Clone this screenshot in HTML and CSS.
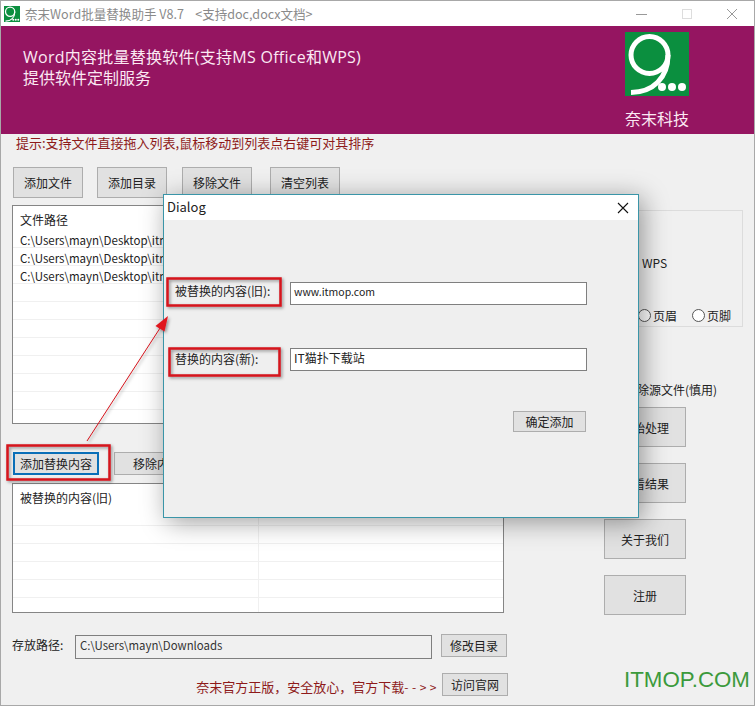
FILE: index.html
```html
<!DOCTYPE html>
<html lang="zh-CN">
<head>
<meta charset="utf-8">
<title>奈末Word批量替换助手</title>
<link rel="stylesheet" href="styles.css">
</head>
<body>
<svg class="defs" width="0" height="0">
  <symbol id="logo" viewBox="0 0 64 64">
    <rect width="64" height="64" fill="#0b8f3f"/>
    <circle cx="24.5" cy="23" r="18.5" fill="none" stroke="#fff" stroke-width="5"/>
    <path d="M43 23C43 46 28 60 6 60.5" fill="none" stroke="#fff" stroke-width="5"/>
    <circle cx="37" cy="55" r="4" fill="#fff"/>
    <circle cx="47" cy="55" r="4" fill="#fff"/>
    <circle cx="57" cy="55" r="4" fill="#fff"/>
  </symbol>
</svg>

<div class="window">
  <div class="titlebar">
    <svg class="app-icon"><use href="#logo"/></svg>
    <span class="title-text">奈末Word批量替换助手 V8.7 &nbsp; &nbsp;&lt;支持doc,docx文档&gt;</span>
    <div class="controls">
      <svg width="12" height="12" viewBox="0 0 12 12"><path d="M0 6.5H11" stroke="#999"/></svg>
      <svg width="12" height="12" viewBox="0 0 12 12"><rect x="1.5" y="1.5" width="9" height="9" fill="none" stroke="#ddd"/></svg>
      <svg width="12" height="12" viewBox="0 0 12 12"><path d="M1 1L11 11M11 1L1 11" stroke="#999"/></svg>
    </div>
  </div>

  <header class="banner">
    <div class="banner-text">
      <div class="banner-line">Word内容批量替换软件(支持MS Office和WPS)</div>
      <div>提供软件定制服务</div>
    </div>
    <div class="brand">
      <svg class="brand-logo"><use href="#logo"/></svg>
      <div class="brand-name">奈末科技</div>
    </div>
  </header>

  <main class="content">
    <section class="left">
      <div class="hint">提示:支持文件直接拖入列表,鼠标移动到列表点右键可对其排序</div>
      <div class="toolbar">
        <button class="btn btn-tool">添加文件</button>
        <button class="btn btn-tool gap-14">添加目录</button>
        <button class="btn btn-tool gap-15">移除文件</button>
        <button class="btn btn-tool gap-18">清空列表</button>
      </div>
      <div class="list list-files">
        <div class="list-head">文件路径</div>
        <div class="row">C:\Users\mayn\Desktop\itmop1.docx</div>
        <div class="row">C:\Users\mayn\Desktop\itmop2.docx</div>
        <div class="row">C:\Users\mayn\Desktop\itmop3.docx</div>
        <div class="row"></div><div class="row"></div><div class="row"></div><div class="row"></div>
        <div class="row"></div><div class="row"></div><div class="row"></div>
      </div>
      <div class="actions">
        <button class="btn btn-primary">添加替换内容</button>
        <button class="btn btn-action">移除内容</button>
      </div>
      <div class="list list-pairs">
        <div class="list-head">被替换的内容(旧)</div>
        <div class="row row-pair"><span></span><span></span></div>
        <div class="row row-pair"><span></span><span></span></div>
        <div class="row row-pair"><span></span><span></span></div>
        <div class="row row-pair"><span></span><span></span></div>
        <div class="row row-pair"><span></span><span></span></div>
        <div class="row row-pair row-last"><span></span><span></span></div>
      </div>
      <div class="path-row">
        <span class="path-label">存放路径:</span>
        <div class="path-input">C:\Users\mayn\Downloads</div>
        <button class="btn btn-small">修改目录</button>
      </div>
      <div class="promo-row">
        <span class="promo">奈末官方正版&#xFF0C;安全放心&#xFF0C;官方下载<span class="promo-arrow">--&gt;&gt;</span></span>
        <button class="btn btn-small">访问官网</button>
      </div>
    </section>

    <aside class="right">
      <div class="group">
        <div class="wps">WPS</div>
        <div class="radios">
          <label class="radio-item"><i class="radio"></i>页眉</label>
          <label class="radio-item"><i class="radio"></i>页脚</label>
        </div>
      </div>
      <div class="delete-source">删除源文件(慎用)</div>
      <div class="side-buttons">
        <button class="btn btn-side">开始处理</button>
        <button class="btn btn-side">查看结果</button>
        <button class="btn btn-side">关于我们</button>
        <button class="btn btn-side">注册</button>
      </div>
    </aside>
  </main>
  <div class="watermark">ITMOP.COM</div>
</div>

<div class="dialog">
  <div class="dialog-title">
    <span>Dialog</span>
    <svg width="12" height="12" viewBox="0 0 12 12"><path d="M1 1L11 11M11 1L1 11" stroke="#111" stroke-width="1.1"/></svg>
  </div>
  <div class="dialog-body">
    <div class="field field-old">
      <span class="field-label">被替换的内容(旧):</span>
      <div class="field-input field-input-old">www.itmop.com</div>
    </div>
    <div class="field field-new">
      <span class="field-label">替换的内容(新):</span>
      <div class="field-input field-input-new">IT猫扑下载站</div>
    </div>
    <div class="dialog-foot"><button class="btn btn-confirm">确定添加</button></div>
  </div>
</div>

<svg class="annotations" width="755" height="706" viewBox="0 0 755 706">
  <defs>
    <filter id="soft" x="-20%" y="-20%" width="150%" height="150%">
      <feDropShadow dx="1.5" dy="1.5" stdDeviation="1.5" flood-color="#000" flood-opacity=".4"/>
    </filter>
  </defs>
  <g filter="url(#soft)">
    <rect x="7.5" y="445.5" width="102" height="34" fill="none" stroke="#d5141c" stroke-width="2.5"/>
    <rect x="167.5" y="278.5" width="113" height="27" fill="none" stroke="#d5141c" stroke-width="2.5"/>
    <rect x="169.5" y="348.5" width="110" height="27" fill="none" stroke="#d5141c" stroke-width="2.5"/>
    <path d="M87 441L162 325" stroke="#d5141c" stroke-width="1"/>
    <path d="M168 316L155.500 326L164.500 331.500Z" fill="#e0141c"/>
  </g>
</svg>
</body>
</html>
```

FILE: styles.css
```css
* { box-sizing: border-box; }
html, body { margin: 0; padding: 0; }
body {
  width: 755px;
  height: 706px;
  position: relative;
  overflow: hidden;
  background: #f0f0f0;
  font-family: "Noto Sans CJK SC", "Noto Sans", sans-serif;
  font-size: 12px;
  color: #222;
}
.defs { position: absolute; }

.window {
  width: 755px;
  height: 706px;
  background: #f0f0f0;
  border: 1px solid #a8a8a8;
  display: flex;
  flex-direction: column;
}
.titlebar {
  height: 25px;
  flex: none;
  background: #fff;
  display: flex;
  align-items: center;
  padding: 0 16px 0 3px;
}
.app-icon { width: 16px; height: 16px; flex: none; }
.title-text { margin-left: 5px; color: #8a8a8a; font-size: 12.550px; white-space: pre; }
.controls { margin-left: auto; display: flex; gap: 33px; }

.banner {
  height: 108px;
  flex: none;
  background: #951561;
  color: #fbe9f3;
  display: flex;
  justify-content: space-between;
  padding: 5px 65px 0 22px;
}
.banner-text {
  font-family: "Open Sans", "Noto Sans CJK SC", sans-serif;
  font-size: 16px;
  line-height: 21px;
  padding-top: 16px;
  white-space: nowrap;
}
.banner-line { letter-spacing: .26px; }
.brand { width: 64px; text-align: center; }
.brand-logo { width: 64px; height: 64px; display: block; margin-top: 1px; }
.brand-name { font-size: 16px; line-height: 22px; margin-top: 11px; white-space: nowrap; }

.content { flex: 1; display: flex; min-height: 0; }
.left { width: 496px; margin-left: 11px; flex: none; }

.hint { height: 20px; line-height: 18px; font-size: 13px; color: #8e1a1a; margin-left: 4px; white-space: nowrap; }

.btn {
  font-family: inherit;
  font-size: 12px;
  color: #222;
  background: #e1e1e1;
  border: 1px solid #adadad;
  padding: 0;
  border-radius: 0;
}
.toolbar { display: flex; margin-top: 13px; padding-left: 1px; }
.btn-tool { width: 70px; height: 31px; }
.gap-14 { margin-left: 14px; }
.gap-15 { margin-left: 15px; }
.gap-18 { margin-left: 18px; }

.list {
  width: 492px;
  background: #fff;
  border: 1px solid #858585;
  overflow: hidden;
}
.list-files { margin-top: 7px; height: 219px; }
.list-pairs { margin-top: 8px; height: 130px; }
.list-head { height: 24px; line-height: 27px; padding-left: 7px; }
.row {
  height: 18px;
  line-height: 20px;
  padding-left: 7px;
  border-bottom: 1px solid #f0f0f0;
  white-space: nowrap;
  font-size: 11.500px;
}
.row-pair { display: grid; grid-template-columns: 246px 1fr; padding-left: 0; }
.row-pair span:first-child { border-right: 1px solid #f0f0f0; }
.row-last { border-bottom: 0; }

.actions { display: flex; margin-top: 28px; padding-left: 1px; gap: 15px; }
.btn-primary { width: 86px; height: 23px; border: 2px solid #0a6fb8; }
.btn-action { width: 86px; height: 23px; }

.path-row { display: flex; align-items: flex-start; margin-top: 21px; height: 25px; }
.path-label { width: 63px; line-height: 22px; }
.path-input {
  width: 357px;
  height: 24px;
  margin-top: 1px;
  line-height: 18px;
  padding-left: 4px;
  font-size: 11.400px;
  background: #f0f0f0;
  border: 1px solid #7f7f7f;
  color: #333;
}
.btn-small { width: 66px; height: 23px; margin-left: 9px; }

.promo-row { display: flex; justify-content: flex-end; margin-top: 14px; }
.promo { color: #8e1a1a; font-size: 13px; line-height: 28px; white-space: nowrap; }
.promo-arrow { letter-spacing: 3.500px; font-size: 12px; }
.promo-row .btn-small { margin-left: 2px; }

.right { flex: none; width: 223px; margin-left: 12px; padding-top: 76px; }
.group {
  width: 223px;
  height: 117px;
  border: 1px solid #dcdcdc;
  padding: 43px 0 0 121px;
}
.wps { line-height: 18px; }
.radios { display: flex; margin-top: 35px; margin-left: -4px; gap: 15px; }
.radio-item { display: flex; align-items: center; white-space: nowrap; }
.radio {
  width: 13px;
  height: 13px;
  border: 1px solid #555;
  border-radius: 50%;
  background: #fff;
  margin-right: 2px;
}
.delete-source { margin: 54px 0 0 105px; line-height: 18px; white-space: nowrap; }
.side-buttons {
  display: flex;
  flex-direction: column;
  gap: 16px;
  margin: 8px 0 0 84px;
}
.btn-side { width: 82px; height: 40px; }

.watermark {
  position: absolute;
  left: 624px;
  top: 666px;
  font-family: "Liberation Sans", sans-serif;
  font-size: 22.300px;
  line-height: 28px;
  color: #3c9a3c;
}

.dialog {
  position: absolute;
  left: 163px;
  top: 194px;
  width: 476px;
  height: 324px;
  background: #efefef;
  border: 1px solid #3a95a8;
  box-shadow: 4px 4px 24px rgba(0, 0, 0, .38);
}
.dialog-title {
  height: 25px;
  background: #fff;
  display: flex;
  align-items: center;
  justify-content: space-between;
  padding: 0 9px 0 3px;
  font-size: 13px;
  line-height: 22px;
  color: #222;
}
.dialog-title span { margin-top: -2px; }
.dialog-body { padding: 62px 50px 0 11px; }
.field { display: flex; }
.field-label { width: 115px; flex: none; line-height: 18px; white-space: nowrap; }
.field-input {
  width: 297px;
  height: 23px;
  background: #fff;
  border: 1px solid #7f7f7f;
  padding-left: 3px;
  line-height: 18px;
  white-space: nowrap;
}
.field-input-old { font-size: 10.500px; }
.field-old { height: 24px; }
.field-new { margin-top: 42px; }
.field-new .field-label { margin-top: 2px; }
.dialog-foot { display: flex; justify-content: flex-end; margin-top: 40px; padding-right: 2px; }
.btn-confirm { width: 73px; height: 21px; }

.annotations { position: absolute; left: 0; top: 0; pointer-events: none; }
```
